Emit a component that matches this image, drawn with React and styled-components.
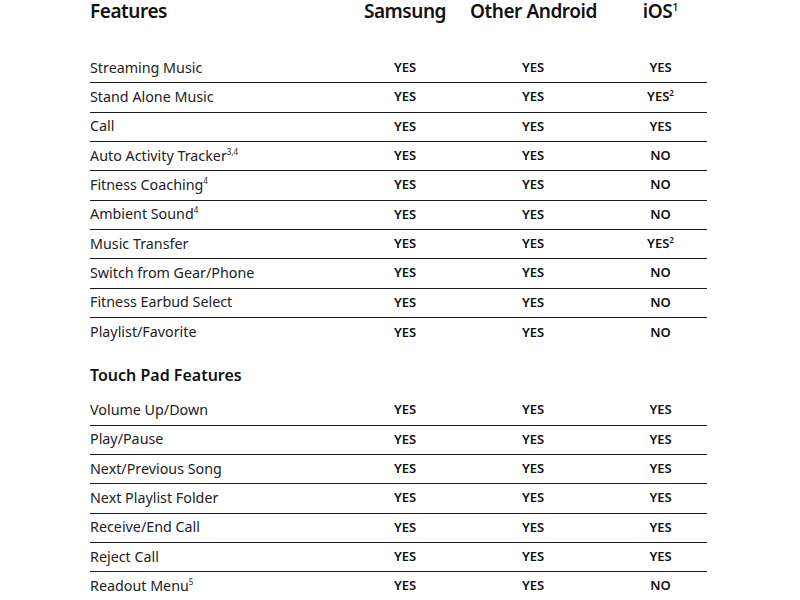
import React from "react";
import styled, { createGlobalStyle } from "styled-components";

const GlobalStyle = createGlobalStyle`
  body {
    margin: 0;
    background: #fff;
    font-family: "Noto Sans", "Open Sans", sans-serif;
    color: #111;
  }
`;

const mainRows = [
  { name: "Streaming Music", ios: "YES" },
  { name: "Stand Alone Music", ios: "YES", iosSup: "2" },
  { name: "Call", ios: "YES" },
  { name: "Auto Activity Tracker", sup: "3,4", ios: "NO" },
  { name: "Fitness Coaching", sup: "4", ios: "NO" },
  { name: "Ambient Sound", sup: "4", ios: "NO" },
  { name: "Music Transfer", ios: "YES", iosSup: "2" },
  { name: "Switch from Gear/Phone", ios: "NO" },
  { name: "Fitness Earbud Select", ios: "NO" },
  { name: "Playlist/Favorite", ios: "NO", last: true },
];

const touchRows = [
  { name: "Volume Up/Down", ios: "YES" },
  { name: "Play/Pause", ios: "YES" },
  { name: "Next/Previous Song", ios: "YES" },
  { name: "Next Playlist Folder", ios: "YES" },
  { name: "Receive/End Call", ios: "YES" },
  { name: "Reject Call", ios: "YES" },
  { name: "Readout Menu", sup: "5", ios: "NO" },
];

const Row = ({ row }) => (
  <TableRow $last={row.last}>
    <Label>
      {row.name}
      {row.sup && <Sup>{row.sup}</Sup>}
    </Label>
    <Value>YES</Value>
    <Value>YES</Value>
    <Value $ios>
      {row.ios}
      {row.iosSup && <Sup>{row.iosSup}</Sup>}
    </Value>
  </TableRow>
);

const App = () => {
  return (
    <>
      <GlobalStyle />
      <Page>
        <HeaderRow>
          <HeadCell>Features</HeadCell>
          <HeadCell $center>Samsung</HeadCell>
          <HeadCell $center>Other Android</HeadCell>
          <HeadCell $center $ios>
            iOS<HeadSup>1</HeadSup>
          </HeadCell>
        </HeaderRow>
        {mainRows.map((row) => (
          <Row key={row.name} row={row} />
        ))}
        <SectionTitle>Touch Pad Features</SectionTitle>
        {touchRows.map((row) => (
          <Row key={row.name} row={row} />
        ))}
      </Page>
    </>
  );
};

export default App;

const Page = styled.div`
  width: 617px;
  margin-left: 90px;
`;

const columns = "250px 130px 126px 111px";

const HeaderRow = styled.div`
  display: grid;
  grid-template-columns: ${columns};
  height: 54px;
  padding-top: 1px;
  box-sizing: border-box;
  align-items: start;
`;

const HeadCell = styled.div`
  font-size: 19px;
  font-weight: 600;
  line-height: 20px;
  letter-spacing: -0.45px;
  white-space: nowrap;
  text-align: ${(p) => (p.$center ? "center" : "left")};
  padding-left: ${(p) => (p.$ios ? "18px" : "0")};
  color: #111;
`;

const HeadSup = styled.sup`
  font-size: 11px;
  font-weight: 500;
  vertical-align: top;
  line-height: 12px;
`;

const TableRow = styled.div`
  display: grid;
  grid-template-columns: ${columns};
  align-items: center;
  height: 29.33px;
  box-sizing: border-box;
  border-bottom: ${(p) => (p.$last ? "none" : "1.3px solid #1a1a1a")};
  padding-bottom: 2px;
`;

const Label = styled.div`
  font-size: 14.3px;
  color: #222;
  white-space: nowrap;
`;

const Value = styled.div`
  font-size: 13px;
  font-weight: 600;
  text-align: center;
  white-space: nowrap;
  padding-left: ${(p) => (p.$ios ? "18px" : "0")};
  color: #111;
`;

const Sup = styled.sup`
  font-size: 8px;
  vertical-align: top;
  line-height: 12px;
`;

const SectionTitle = styled.div`
  height: 49px;
  display: flex;
  align-items: center;
  padding-top: 7px;
  box-sizing: border-box;
  font-size: 16px;
  font-weight: 600;
  color: #111;
`;
